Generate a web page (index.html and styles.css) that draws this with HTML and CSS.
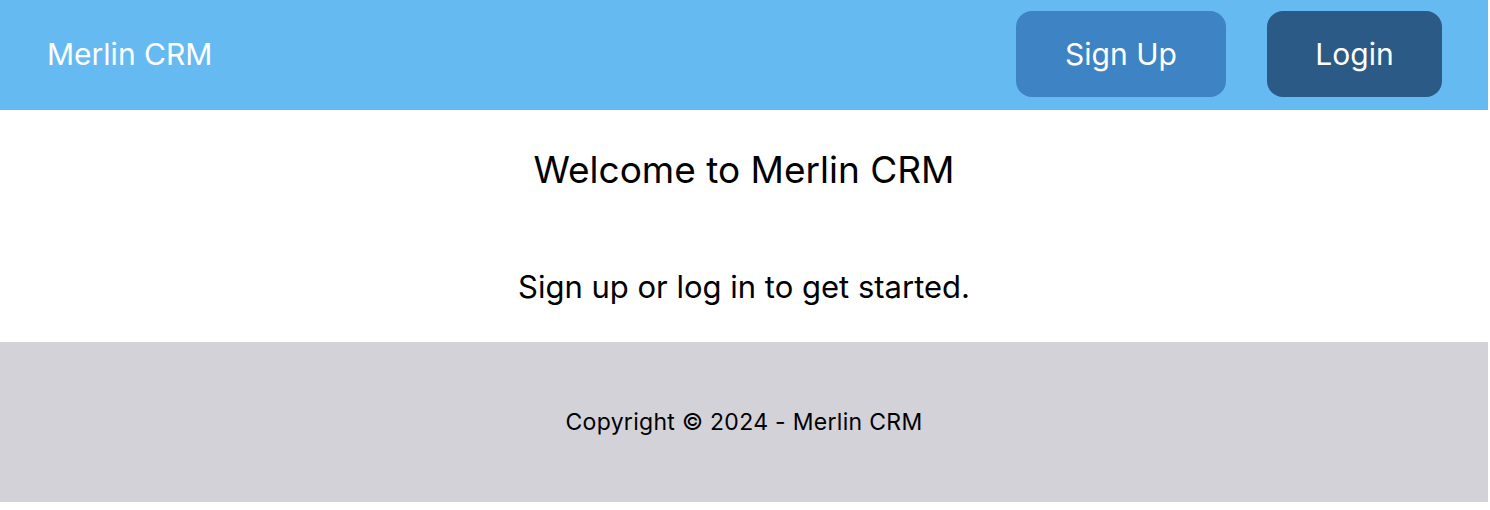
FILE: index.html
```html
<!DOCTYPE html>
<html lang="en">
<head>
<meta charset="utf-8">
<title>Merlin CRM</title>
<link rel="stylesheet" href="styles.css">
</head>
<body>
<div class="page">
  <header class="topbar">
    <div class="brand">Merlin CRM</div>
    <nav class="actions">
      <a class="btn btn-signup" href="#">Sign Up</a>
      <a class="btn btn-login" href="#">Login</a>
    </nav>
  </header>
  <main class="hero">
    <h1 class="hero-title">Welcome to Merlin CRM</h1>
    <p class="hero-text">Sign up or log in to get started.</p>
  </main>
  <footer class="footer">
    <p class="footer-text">Copyright © 2024 - Merlin CRM</p>
  </footer>
</div>
</body>
</html>
```

FILE: styles.css
```css
* { box-sizing: border-box; }
html, body { margin: 0; padding: 0; background: #ffffff; }
body {
  font-family: Inter, "Liberation Sans", Arial, sans-serif;
  color: #000;
}
.page {
  width: 1488px;
}
.topbar {
  height: 110px;
  background: #66baf2;
  display: flex;
  align-items: center;
  justify-content: space-between;
  padding: 0 46px 2px 47px;
}
.brand {
  color: #fff;
  font-size: 30px;
}
.actions {
  display: flex;
  gap: 41px;
}
.btn {
  display: flex;
  align-items: center;
  justify-content: center;
  height: 86px;
  padding: 0 48px;
  border-radius: 16px;
  color: #fff;
  text-decoration: none;
  font-size: 30px;
}
.btn-signup { background: #3e83c3; width: 210px; }
.btn-login { background: #2a5a85; width: 175px; }
.hero {
  text-align: center;
  padding: 38px 0 36px;
}
.hero-title {
  margin: 0;
  font-size: 37px;
  font-weight: 400;
  line-height: 44px;
}
.hero-text {
  margin: 76px 0 0;
  font-size: 31px;
  line-height: 38px;
}
.footer {
  background: #d3d2d8;
  height: 160px;
  display: flex;
  align-items: center;
  justify-content: center;
}
.footer-text {
  margin: 0;
  font-size: 23px;
  letter-spacing: 0.3px;
}
```
